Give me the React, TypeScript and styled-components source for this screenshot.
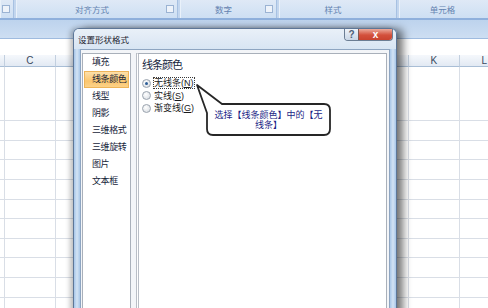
import React from "react";
import styled, { createGlobalStyle } from "styled-components";

const GlobalStyle = createGlobalStyle`
  html, body {
    margin: 0;
    padding: 0;
    background: #ffffff;
    overflow: hidden;
  }
  body {
    font-family: "Noto Sans CJK SC", "Liberation Sans", sans-serif;
  }
`;

const ribbonGroups = [
  { label: "", width: 14, launcher: true },
  { label: "对齐方式", width: 162, launcher: true },
  { label: "数字", width: 97, launcher: true },
  { label: "样式", width: 118, launcher: false },
  { label: "单元格", width: 97, launcher: false },
];

const columns = ["", "C", "D", "E", "F", "G", "H", "I", "J", "K", "L"];
const navItems = ["填充", "线条颜色", "线型", "阴影", "三维格式", "三维旋转", "图片", "文本框"];

const Page = styled.div`
  position: relative;
  width: 488px;
  height: 308px;
  overflow: hidden;
  background: #ffffff;
`;

/* ribbon group labels */
const Ribbon = styled.div`
  display: flex;
  height: 18px;
  background: #c3d6ee;
  border-bottom: 2px solid #8fb0dc;
`;

const Group = styled.div<{ $w: number }>`
  position: relative;
  display: flex;
  align-items: center;
  justify-content: center;
  flex: 0 0 ${({ $w }) => $w}px;
  margin-right: 2px;
  padding-right: ${({ $w }) => ($w > 20 ? 10 : 0)}px;
  box-sizing: border-box;
  background: linear-gradient(#dfe9f6, #cddff3);
  border-left: 1px solid #e9f1fa;
  border-right: 1px solid #a7c1e2;
  font-size: 8.5px;
  color: #6382b0;
`;

const Launcher = styled.span`
  position: absolute;
  right: 3px;
  top: 5px;
  width: 6px;
  height: 6px;
  border: 1px solid #9bb3d3;
  background: #eef3fa;
`;

const Band = styled.div`
  height: 18px;
  background: linear-gradient(#bdd3ed, #cddef2);
  border-bottom: 1px solid #9fbbdf;
`;

const FormulaRow = styled.div`
  height: 16px;
  background: #ffffff;
`;

/* sheet grid */
const Sheet = styled.div`
  display: grid;
  grid-template-columns: 5px repeat(10, 50.5px);
  grid-template-rows: 12px 54px;
  grid-auto-rows: 19.65px;
`;

const HeadCell = styled.div`
  display: flex;
  align-items: center;
  justify-content: center;
  background: linear-gradient(#f5f8fc, #e2e9f3);
  border-right: 1px solid #c2cfdf;
  border-bottom: 1px solid #a9bed6;
  font-family: "Liberation Sans", sans-serif;
  font-size: 10px;
  color: #3a4a60;
  overflow: hidden;
`;

const Cell = styled.div`
  border-right: 1px solid #d9dee6;
  border-bottom: 1px solid #d9dee6;
`;

/* dialog */
const Dialog = styled.div`
  position: absolute;
  left: 73px;
  top: 28px;
  width: 324px;
  height: 300px;
  box-sizing: border-box;
  display: flex;
  flex-direction: column;
  padding: 0 6px;
  border: 1px solid #5d7697;
  border-bottom: none;
  border-radius: 6px 6px 0 0;
  background: linear-gradient(90deg, #a6c5e8 0, #d3e3f4 3px, #a9c7e8 6px, #a9c7e8 calc(100% - 6px), #d3e3f4 calc(100% - 3px), #a6c5e8 100%);
  box-shadow: 7px 0 9px -1px rgba(0, 0, 0, 0.55), -3px 0 5px rgba(0, 0, 0, 0.25);
`;

const TitleBar = styled.div`
  display: flex;
  align-items: flex-start;
  justify-content: space-between;
  height: 20px;
  margin: 0 -6px;
  padding: 0 3px 0 4px;
  border-radius: 5px 5px 0 0;
  background: linear-gradient(#e9f0f8, #d8e5f3);
`;

const Title = styled.span`
  margin-top: 4px;
  font-size: 8.5px;
  line-height: 12px;
  color: #1d2430;
`;

const Caption = styled.div`
  display: flex;
  border: 1px solid #6b7d93;
  border-top: none;
  border-radius: 0 0 4px 4px;
  overflow: hidden;
`;

const CapButton = styled.div<{ $close?: boolean }>`
  display: flex;
  align-items: center;
  justify-content: center;
  width: ${({ $close }) => ($close ? 33 : 13)}px;
  height: 11px;
  font-family: "Liberation Sans", sans-serif;
  font-size: 10px;
  font-weight: bold;
  line-height: 1;
  color: ${({ $close }) => ($close ? "#ffffff" : "#4d5f78")};
  background: ${({ $close }) =>
    $close ? "linear-gradient(#ecab9c, #d3503c 55%, #c9432f)" : "linear-gradient(#eef3f9, #c9d6e6)"};
  border-left: ${({ $close }) => ($close ? "1px solid #7c5a55" : "none")};
`;

const Client = styled.div`
  flex: 1;
  display: flex;
  gap: 5px;
  padding: 3px 2px 0 1px;
  border: 1px solid #8ea5c1;
  border-bottom: none;
  background: #f3f5f8;
`;

const NavPanel = styled.div`
  flex: 0 0 49px;
  min-width: 0;
  box-sizing: border-box;
  padding-top: 0;
  background: #ffffff;
  border: 1px solid #a9b0ba;
  border-bottom: none;
`;

const NavItem = styled.div<{ $active?: boolean }>`
  height: 16.9px;
  display: flex;
  align-items: center;
  padding-left: 8px;
  margin: 0 1px;
  font-size: 9px;
  letter-spacing: -0.4px;
  line-height: 12px;
  color: #16243a;
  white-space: nowrap;
  overflow: hidden;
  background: ${({ $active }) => ($active ? "linear-gradient(#fde3b2, #fbc66e 60%, #fcd48d)" : "transparent")};
  box-shadow: ${({ $active }) => ($active ? "inset 0 0 0 1px #eeb458" : "none")};
`;

const ContentPanel = styled.div`
  flex: 1;
  min-width: 0;
  box-sizing: border-box;
  padding: 2px 0 0 3px;
  background: #ffffff;
  border: 1px solid #a9b0ba;
  border-left: 3px double #b9bec6;
  border-bottom: none;
`;

const Heading = styled.div`
  font-size: 11px;
  letter-spacing: -1px;
  line-height: 16px;
  color: #15253d;
`;

const RadioGroup = styled.div`
  margin-top: 5px;
`;

const RadioRow = styled.div`
  display: flex;
  align-items: center;
  gap: 2px;
  height: 12.5px;
  font-family: "Liberation Sans", "Noto Sans CJK SC", sans-serif;
  font-size: 9px;
  line-height: 10px;
  color: #1a1a1a;
`;

const Radio = styled.span<{ $checked?: boolean }>`
  display: inline-flex;
  align-items: center;
  justify-content: center;
  width: 7px;
  height: 7px;
  border-radius: 50%;
  border: 1px solid #9aa3ae;
  background: radial-gradient(circle at 40% 35%, #ffffff, #d4d9df);
  &::after {
    content: "";
    width: 3px;
    height: 3px;
    border-radius: 50%;
    background: ${({ $checked }) => ($checked ? "#2c5d96" : "transparent")};
  }
`;

const Label = styled.span<{ $focus?: boolean }>`
  padding: 0;
  line-height: 10px;
  border: 1px dotted ${({ $focus }) => ($focus ? "#3a3a3a" : "transparent")};
  & u {
    text-decoration: underline;
  }
`;

/* callout */
const Callout = styled.div`
  position: absolute;
  left: 194px;
  top: 82px;
  width: 140px;
  height: 56px;
`;

const CalloutText = styled.div`
  position: absolute;
  left: 13px;
  top: 22px;
  width: 123px;
  height: 31px;
  display: flex;
  flex-direction: column;
  align-items: center;
  justify-content: center;
  font-size: 9px;
  line-height: 10px;
  color: #1c1f86;
  white-space: nowrap;
`;

const Shape = styled.svg`
  position: absolute;
  left: 0;
  top: 0;
  overflow: visible;
`;

export default function App() {
  const bodyRows = 10;
  return (
    <Page>
      <GlobalStyle />
      <Ribbon>
        {ribbonGroups.map((g, i) => (
          <Group key={i} $w={g.width}>
            {g.label}
            {g.launcher && <Launcher />}
          </Group>
        ))}
      </Ribbon>
      <Band />
      <FormulaRow />
      <Sheet>
        {columns.map((c, i) => (
          <HeadCell key={"h" + i}>{c}</HeadCell>
        ))}
        {Array.from({ length: (bodyRows + 1) * columns.length }).map((_, i) => (
          <Cell key={i} />
        ))}
      </Sheet>

      <Dialog>
        <TitleBar>
          <Title>设置形状格式</Title>
          <Caption>
            <CapButton>?</CapButton>
            <CapButton $close>x</CapButton>
          </Caption>
        </TitleBar>
        <Client>
          <NavPanel>
            {navItems.map((n, i) => (
              <NavItem key={n} $active={i === 1}>
                {n}
              </NavItem>
            ))}
          </NavPanel>
          <ContentPanel>
            <Heading>线条颜色</Heading>
            <RadioGroup>
              <RadioRow>
                <Radio $checked />
                <Label $focus>
                  无线条(<u>N</u>)
                </Label>
              </RadioRow>
              <RadioRow>
                <Radio />
                <Label>
                  实线(<u>S</u>)
                </Label>
              </RadioRow>
              <RadioRow>
                <Radio />
                <Label>
                  渐变线(<u>G</u>)
                </Label>
              </RadioRow>
            </RadioGroup>
          </ContentPanel>
        </Client>
      </Dialog>

      <Callout>
        <Shape width="140" height="56" viewBox="0 0 140 56">
          <path
            d="M 28 22 L 130 22 Q 136 22 136 28 L 136 47 Q 136 53 130 53 L 19 53 Q 13 53 13 47 L 13 31 L 3 3 Z"
            fill="#ffffff"
            stroke="#262626"
            strokeWidth="1.8"
            strokeLinejoin="round"
          />
        </Shape>
        <CalloutText>
          <span>选择【线条颜色】中的【无</span>
          <span>线条】</span>
        </CalloutText>
      </Callout>
    </Page>
  );
}
